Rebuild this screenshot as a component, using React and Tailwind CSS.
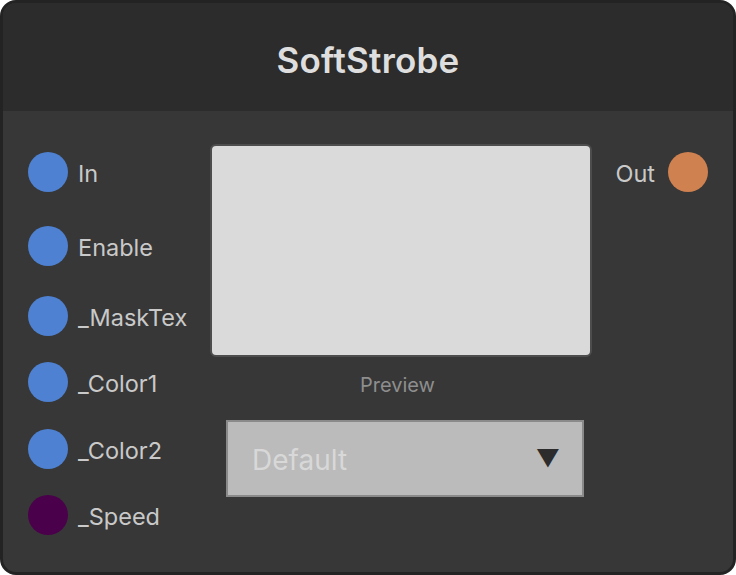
import React from 'react'

const inputs = [
  { name: 'In', color: 'bg-[#4e81d1]', mt: 'mt-[41px]' },
  { name: 'Enable', color: 'bg-[#4e81d1]', mt: 'mt-[34px]' },
  { name: '_MaskTex', color: 'bg-[#4e81d1]', mt: 'mt-[30px]' },
  { name: '_Color1', color: 'bg-[#4e81d1]', mt: 'mt-[26px]' },
  { name: '_Color2', color: 'bg-[#4e81d1]', mt: 'mt-[27px]' },
  { name: '_Speed', color: 'bg-[#4a004a]', mt: 'mt-[26px]' },
]

function Port({ name, color, mt }) {
  return (
    <div className={`flex items-center h-[40px] ${mt}`}>
      <div className={`w-[40px] h-[40px] rounded-full ${color} shrink-0`} />
      <span className="ml-[10px] pt-[3px] text-[23.5px] text-[#c9c9c9] whitespace-nowrap">{name}</span>
    </div>
  )
}

export default function App() {
  return (
    <div
      className="w-[736px] h-[575px] bg-white"
      style={{ fontFamily: 'Inter, "Noto Sans", sans-serif' }}
    >
      <div className="w-full h-full rounded-[16px] border-[3px] border-[#232323] overflow-hidden flex flex-col bg-[#373737]">
        <div className="h-[108px] shrink-0 bg-[#2c2c2c] flex items-center justify-center pt-[6px]">
          <h1 className="text-[35px] font-semibold text-[#dedede] tracking-[0.2px]">SoftStrobe</h1>
        </div>
        <div className="flex flex-1">
          <div className="w-[207px] pl-[25px] flex flex-col">
            {inputs.map(p => (
              <Port key={p.name} {...p} />
            ))}
          </div>
          <div className="w-[382px] flex flex-col items-center">
            <div className="mt-[33px] w-[382px] h-[213px] rounded-[6px] border-2 border-[#4d4d4d] bg-[#dadada]" />
            <div className="mt-[13px] -ml-[7px] text-[20px] text-[#8e8e8e]">Preview</div>
            <div className="mt-[20px] self-start ml-[16px] w-[358px] h-[77px] border-2 border-[#8a8a8a] bg-[#bbbbbb] flex items-center justify-between pl-[24px] pr-[22px]">
              <span className="pt-[2px] text-[28px] text-[#d8d8d8]">Default</span>
              <span className="text-[24px] text-[#2c2c2c] leading-none">▼</span>
            </div>
          </div>
          <div className="flex-1 flex justify-end pr-[25px]">
            <div className="mt-[41px] h-[40px] flex items-center">
              <span className="pt-[3px] text-[23.5px] text-[#c9c9c9] mr-[13px]">Out</span>
              <div className="w-[40px] h-[40px] rounded-full bg-[#cf8150]" />
            </div>
          </div>
        </div>
      </div>
    </div>
  )
}
